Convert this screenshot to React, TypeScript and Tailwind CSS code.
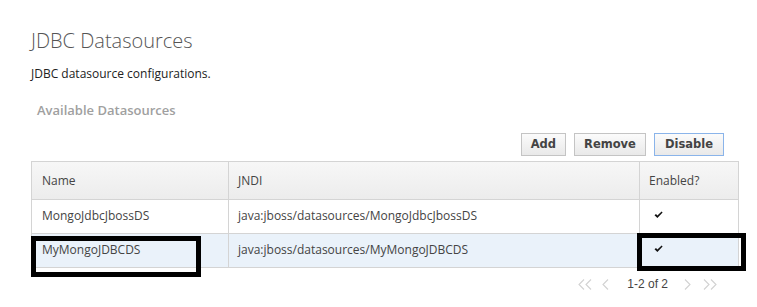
import React from 'react';

const rows = [
  { name: 'MongoJdbcJbossDS', jndi: 'java:jboss/datasources/MongoJdbcJbossDS', selected: false },
  { name: 'MyMongoJDBCDS', jndi: 'java:jboss/datasources/MyMongoJDBCDS', selected: true },
];

const Check = () => (
  <svg width="9" height="8" viewBox="0 0 9 8" className="block">
    <path d="M0.5 4.2 L2 3 L3.4 4.6 L7.6 0.6 L8.6 1.5 L3.4 7 Z" fill="#111" />
  </svg>
);

// pager chevrons, thin and light grey
const Chevron = ({ dir, double }: { dir: 'left' | 'right'; double?: boolean }) => {
  const one = (x: number) =>
    dir === 'left' ? `M${x + 5} 0.5 L${x} 5.5 L${x + 5} 10.5` : `M${x} 0.5 L${x + 5} 5.5 L${x} 10.5`;
  return (
    <svg width={double ? 15 : 9} height="11" viewBox={double ? '0 0 15 11' : '0 0 9 11'} className="block">
      <path d={double ? one(1) + ' ' + one(8) : one(2)} stroke="#d2d2d2" strokeWidth="1.1" fill="none" />
    </svg>
  );
};

const Btn = ({ label, active }: { label: string; active?: boolean }) => (
  <button
    className={
      'h-[23px] border bg-gradient-to-b from-[#fbfbfb] to-[#e9e9e9] font-["DejaVu_Sans",sans-serif] text-[11.5px] font-bold text-[#444] ' +
      (active ? 'border-[#8ab4ea] px-[10px]' : 'border-[#c4c4c4] px-[9px]')
    }
  >
    {label}
  </button>
);

export default function App() {
  return (
    <div className="relative h-[307px] w-[757px] overflow-hidden bg-white font-['Open_Sans',sans-serif]">
      <div className="pl-[31px] pr-[18px] pt-[27px]">
        <h1 className="text-[20px] font-light leading-[28px] text-[#555]">JDBC Datasources</h1>
        <p className="mt-[11px] text-[12px] leading-[16px] text-[#222]">JDBC datasource configurations.</p>
        <h2 className="mt-[20px] pl-[6px] text-[13px] font-semibold leading-[16px] text-[#a0a0a0]">
          Available Datasources
        </h2>

        <div className="mt-[15px] flex justify-end gap-[8px] pr-[15px]">
          <Btn label="Add" />
          <Btn label="Remove" />
          <Btn label="Disable" active />
        </div>

        <table className="mt-[5px] w-[708px] border-collapse text-[12px] text-[#444]">
          <thead>
            <tr className="h-[38px] bg-gradient-to-b from-[#f7f7f7] to-[#ececec]">
              <th className="w-[197px] border border-[#d4d4d4] pl-[10px] text-left font-normal">Name</th>
              <th className="w-[411px] border border-[#d4d4d4] pl-[9px] text-left font-normal">JNDI</th>
              <th className="border border-[#d4d4d4] pl-[9px] text-left font-normal">Enabled?</th>
            </tr>
          </thead>
          <tbody>
            {rows.map((r) => (
              <tr key={r.name} className={'h-[34px] ' + (r.selected ? 'bg-[#eaf2fa]' : 'bg-white')}>
                <td className="border border-[#d4d4d4] pl-[10px] pb-[2px]">{r.name}</td>
                <td className="border border-[#d4d4d4] pl-[9px] pb-[2px]">{r.jndi}</td>
                <td className="border border-[#d4d4d4] pl-[14px] pb-[4px]">
                  <Check />
                </td>
              </tr>
            ))}
          </tbody>
        </table>

        <div className="mt-[9px] flex w-[708px] items-center justify-end pr-[21px] font-['Liberation_Sans',sans-serif] text-[12px] text-[#444]">
          <Chevron dir="left" double />
          <span className="ml-[8px]">
            <Chevron dir="left" />
          </span>
          <span className="ml-[17px] leading-[14px]">1-2 of 2</span>
          <span className="ml-[15px]">
            <Chevron dir="right" />
          </span>
          <span className="ml-[11px]">
            <Chevron dir="right" double />
          </span>
        </div>
      </div>

      {/* annotation boxes */}
      <div className="absolute left-[31px] top-[236px] h-[41px] w-[170px] border-[5px] border-black" />
      <div className="absolute left-[637px] top-[233px] h-[38px] w-[109px] border-[5px] border-black" />
    </div>
  );
}
